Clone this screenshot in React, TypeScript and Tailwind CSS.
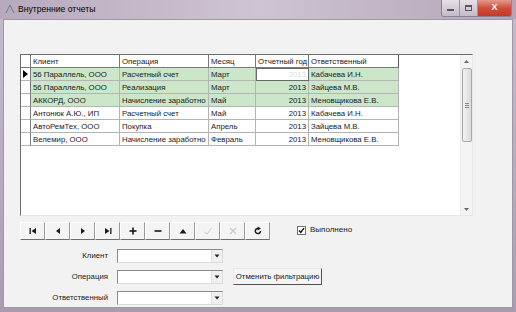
import React from "react";

interface Row {
    client: string;
    op: string;
    month: string;
    year: string;
    resp: string;
    done: boolean;
}

const rows: Row[] = [
    { client: "56 Параллель, ООО", op: "Расчетный счет", month: "Март", year: "2013", resp: "Кабачева И.Н.", done: true },
    { client: "56 Параллель, ООО", op: "Реализация", month: "Март", year: "2013", resp: "Зайцева М.В.", done: true },
    { client: "АККОРД, ООО", op: "Начисление заработно", month: "Май", year: "2013", resp: "Меновщикова Е.В.", done: true },
    { client: "Антонюк А.Ю., ИП", op: "Расчетный счет", month: "Май", year: "2013", resp: "Кабачева И.Н.", done: false },
    { client: "АвтоРемТех, ООО", op: "Покупка", month: "Апрель", year: "2013", resp: "Зайцева М.В.", done: false },
    { client: "Велемир, ООО", op: "Начисление заработно", month: "Февраль", year: "2013", resp: "Меновщикова Е.В.", done: false },
];

const cell = "h-[13px] leading-[13px] px-[2px] overflow-hidden whitespace-nowrap border-r border-b border-[#b4b4b4]";

function NavIcon({ kind }: { kind: string }) {
    const c = kind === "post" || kind === "cancel" ? "#c8c8c8" : "#1a1a1a";
    return (
        <svg width="10" height="10" viewBox="0 0 10 10">
            {kind === "first" && (
                <>
                    <rect x="1.5" y="2" width="1.3" height="6" fill={c} />
                    <polygon points="8,2 3.5,5 8,8" fill={c} />
                </>
            )}
            {kind === "prior" && <polygon points="7,2 3,5 7,8" fill={c} />}
            {kind === "next" && <polygon points="3,2 7,5 3,8" fill={c} />}
            {kind === "last" && (
                <>
                    <polygon points="2,2 6.5,5 2,8" fill={c} />
                    <rect x="7.2" y="2" width="1.3" height="6" fill={c} />
                </>
            )}
            {kind === "insert" && (
                <>
                    <rect x="1.5" y="4.2" width="7" height="1.6" fill={c} />
                    <rect x="4.2" y="1.5" width="1.6" height="7" fill={c} />
                </>
            )}
            {kind === "delete" && <rect x="1.5" y="4.2" width="7" height="1.6" fill={c} />}
            {kind === "edit" && <polygon points="1.5,7.5 5,3 8.5,7.5" fill={c} />}
            {kind === "post" && <polyline points="1.5,6 4,8 8.5,2" fill="none" stroke={c} strokeWidth="1" />}
            {kind === "cancel" && (
                <path d="M2 2 L8 8 M8 2 L2 8" stroke={c} strokeWidth="1.1" />
            )}
            {kind === "refresh" && (
                <>
                    <path d="M7.5 5 A2.6 2.6 0 1 1 5 2.4" fill="none" stroke={c} strokeWidth="1.5" />
                    <polygon points="4.6,0.6 8,2.4 4.6,4.4" fill={c} />
                </>
            )}
        </svg>
    );
}

function Combo() {
    return (
        <div className="w-[106px] h-[14px] bg-white border border-[#8a8a8a] border-r-[#dcdcdc] border-b-[#dcdcdc] flex justify-end">
            <div className="w-[11px] h-full bg-[#f0f0f0] border-l border-[#e0e0e0] flex items-center justify-center">
                <svg width="6" height="4" viewBox="0 0 6 4">
                    <polygon points="0.5,0.5 5.5,0.5 3,3.5" fill="#222" />
                </svg>
            </div>
        </div>
    );
}

export default function App() {
    const navKinds = ["first", "prior", "next", "last", "insert", "delete", "edit", "post", "cancel", "refresh"];

    return (
        <div
            className="w-[516px] h-[312px] flex flex-col bg-gradient-to-b from-[#c7bccc] via-[#b9adbf] to-[#a99cae] text-[7.8px] text-[#1a1a1a]"
            style={{ fontFamily: '"Liberation Sans", Arial, sans-serif' }}
        >
            {/* Title bar */}
            <div className="h-[19px] flex items-start shrink-0 bg-gradient-to-r from-[#b8aabd] via-[#cfc4d3] to-[#b3a6b8]">
                <div className="flex items-center h-[18px] pl-[5px] gap-[3px]">
                    <svg width="10" height="10" viewBox="0 0 10 10">
                        <path d="M1 9 L5 1 L9 9" fill="none" stroke="#6b7b9b" strokeWidth="1" />
                        <path d="M3 6 L7 6" stroke="#9aa8c4" strokeWidth="1" />
                    </svg>
                    <span className="text-[8.6px] text-black">Внутренние отчеты</span>
                </div>
                <div className="flex-1" />
                <div className="flex mr-[4px] h-[17px] rounded-b-[3px] overflow-hidden border border-t-0 border-[#8d8294]">
                    <div className="w-[18px] bg-gradient-to-b from-[#e6e0e8] to-[#c4bac9] flex items-center justify-center border-r border-[#9d93a3]">
                        <div className="w-[7px] h-[2px] bg-[#5a5260] mt-[4px]" />
                    </div>
                    <div className="w-[18px] bg-gradient-to-b from-[#e6e0e8] to-[#c4bac9] flex items-center justify-center border-r border-[#9d93a3]">
                        <div className="w-[7px] h-[6px] border border-[#5a5260] border-t-2" />
                    </div>
                    <div className="w-[33px] bg-gradient-to-b from-[#e39a8c] via-[#cf4d3a] to-[#c23a2a] flex items-center justify-center text-white text-[9px] font-bold">
                        X
                    </div>
                </div>
            </div>

            {/* Window body */}
            <div className="flex-1 flex px-[3px] pb-[4px]">
                <div className="flex-1 bg-[#f2f2f2] border border-[#9e98a2] flex flex-col pl-[16px] pt-[34px]">
                    {/* Grid */}
                    <div className="w-[453px] h-[162px] bg-white border-l border-t border-[#6e6e6e] border-r border-r-[#e8e8e8] border-b border-b-[#e8e8e8] flex">
                        <div className="flex-1 flex flex-col">
                            <div className="flex">
                                <div className={`${cell} w-[10px] bg-white border-r-[#7a7a7a] border-b-[#7a7a7a]`} />
                                <div className={`${cell} w-[89px] border-r-[#7a7a7a] border-b-[#7a7a7a]`}>Клиент</div>
                                <div className={`${cell} w-[89px] border-r-[#7a7a7a] border-b-[#7a7a7a]`}>Операция</div>
                                <div className={`${cell} w-[47px] border-r-[#7a7a7a] border-b-[#7a7a7a]`}>Месяц</div>
                                <div className={`${cell} w-[53px] border-r-[#7a7a7a] border-b-[#7a7a7a]`}>Отчетный год</div>
                                <div className={`${cell} w-[90px] border-r-[#5a5a5a] border-b-[#7a7a7a]`}>Ответственный</div>
                            </div>
                            {rows.map((r, i) => {
                                const bg = r.done ? "bg-[#cbe6c8]" : "bg-white";
                                return (
                                    <div key={i} className="flex">
                                        <div className={`${cell} w-[10px] bg-white border-r-[#7a7a7a] flex items-center justify-center px-0`}>
                                            {i === 0 && (
                                                <svg width="5" height="8" viewBox="0 0 5 8">
                                                    <polygon points="0,0 5,4 0,8" fill="#000" />
                                                </svg>
                                            )}
                                        </div>
                                        <div className={`${cell} w-[89px] ${bg}`}>{r.client}</div>
                                        <div className={`${cell} w-[89px] ${bg}`}>{r.op}</div>
                                        <div className={`${cell} w-[47px] ${bg}`}>{r.month}</div>
                                        {i === 0 ? (
                                            <div className={`${cell} w-[53px] bg-white text-right text-[#dcdcdc] outline outline-1 -outline-offset-1 outline-[#6a6a6a]`}>
                                                {r.year}
                                            </div>
                                        ) : (
                                            <div className={`${cell} w-[53px] ${bg} text-right`}>{r.year}</div>
                                        )}
                                        <div className={`${cell} w-[90px] ${bg}`}>{r.resp}</div>
                                    </div>
                                );
                            })}
                        </div>

                        {/* Scrollbar */}
                        <div className="w-[12px] bg-[#f4f4f4] border-l border-[#ececec] flex flex-col items-center">
                            <div className="h-[12px] flex items-center justify-center">
                                <svg width="5" height="3" viewBox="0 0 5 3">
                                    <polygon points="0,3 2.5,0 5,3" fill="#6a6a6a" />
                                </svg>
                            </div>
                            <div className="w-[10px] h-[74px] mt-[1px] rounded-[2px] border border-[#a8a8a8] bg-gradient-to-r from-[#f2f2f2] to-[#dadada] flex flex-col items-center justify-center gap-[1px]">
                                <div className="w-[4px] h-px bg-[#8a8a8a]" />
                                <div className="w-[4px] h-px bg-[#8a8a8a]" />
                                <div className="w-[4px] h-px bg-[#8a8a8a]" />
                            </div>
                            <div className="flex-1" />
                            <div className="h-[12px] flex items-center justify-center">
                                <svg width="5" height="3" viewBox="0 0 5 3">
                                    <polygon points="0,0 2.5,3 5,0" fill="#6a6a6a" />
                                </svg>
                            </div>
                        </div>
                    </div>

                    {/* Navigator + checkbox */}
                    <div className="flex items-start mt-[6px]">
                        <div className="flex">
                            {navKinds.map((k) => (
                                <div
                                    key={k}
                                    className="w-[25px] h-[18px] bg-[#f4f4f4] border border-white border-r-[#9a9a9a] border-b-[#6e6e6e] flex items-center justify-center"
                                >
                                    <NavIcon kind={k} />
                                </div>
                            ))}
                        </div>
                        <div className="flex items-center ml-[27px] mt-[2px] gap-[4px]">
                            <div className="w-[9px] h-[9px] bg-white border border-[#707070] flex items-center justify-center">
                                <svg width="7" height="7" viewBox="0 0 7 7">
                                    <polyline points="1,3.5 2.8,5.5 6,1.2" fill="none" stroke="#111" strokeWidth="1.4" />
                                </svg>
                            </div>
                            <span className="text-[8px]">Выполнено</span>
                        </div>
                    </div>

                    {/* Filters */}
                    <div className="flex mt-[9px]">
                        <div className="flex flex-col gap-[7px]">
                            <div className="flex items-center">
                                <span className="w-[97px] text-right pr-[9px]">Клиент</span>
                                <Combo />
                            </div>
                            <div className="flex items-center">
                                <span className="w-[97px] text-right pr-[9px]">Операция</span>
                                <Combo />
                            </div>
                            <div className="flex items-center">
                                <span className="w-[97px] text-right pr-[9px]">Ответственный</span>
                                <Combo />
                            </div>
                        </div>
                        <div className="ml-[10px] mt-[19px]">
                            <div className="w-[89px] h-[17px] bg-[#f4f4f4] border border-[#e8e8e8] border-r-[#505050] border-b-[#505050] flex items-center justify-center">
                                Отменить фильтрацию
                            </div>
                        </div>
                    </div>
                </div>
            </div>
        </div>
    );
}
